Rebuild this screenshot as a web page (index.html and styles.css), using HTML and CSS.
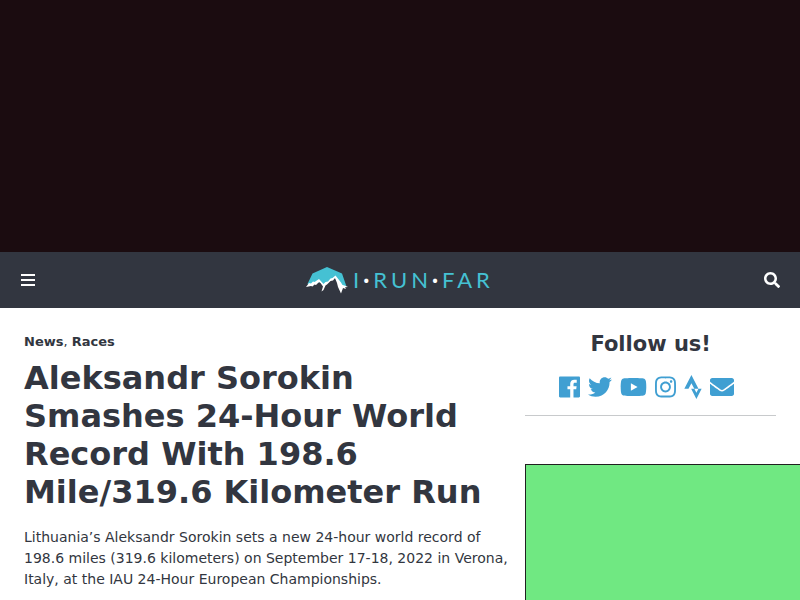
FILE: index.html
```
<!DOCTYPE html>
<html lang="en">
<head>
<meta charset="utf-8">
<meta name="viewport" content="width=device-width, initial-scale=1">
<title>Aleksandr Sorokin Smashes 24-Hour World Record</title>
<link rel="stylesheet" href="styles.css">
</head>
<body>
<div class="banner"></div>
<header class="navbar">
  <button class="nav-button" type="button" aria-label="Menu">
    <svg class="icon-menu" viewBox="0 0 14 12" shape-rendering="crispEdges"><path d="M0 0h14v2H0zM0 5h14v2H0zM0 10h14v2H0z"/></svg>
  </button>
  <a class="logo" href="#">
    <svg class="logo-mark" viewBox="0 0 42 28">
      <path fill="#45c1d3" d="M1.500 18L6.500 7.500 21 1l15 6.500 4.500 13-4 .5-7.500-9-5 2-6 6-4-4-8 3z"/>
      <path fill="#fff" d="M0 21l3-4 2 .5 2-2 1.500.5L13 13l4.500 5 2-2 2.500-.5 2.500-3 2-.5L29.500 9.500l5.500 7 1.500 2.500 2 .5 3.500 1.500-3 .3 1 1.700-3-1-2 5.500L32 21l-1-4-2-5-2 2.500-2.500.5-3.500 3.500-1.500 1-2 4.500-2 1.500 1.500-5-2.500-3.500-1.500-1-3 3-1.500-.5-2 2-1.500-.5z"/>
    </svg>
    <span class="wordmark">I<b>·</b>RUN<b>·</b>FAR</span>
  </a>
  <button class="nav-button" type="button" aria-label="Search">
    <svg class="icon-search" viewBox="0 0 512 512"><path d="M505 442.700L405.300 343c-4.500-4.500-10.600-7-17-7H372c27.600-35.300 44-79.700 44-128C416 93.100 322.900 0 208 0S0 93.100 0 208s93.100 208 208 208c48.300 0 92.700-16.400 128-44v16.300c0 6.400 2.500 12.500 7 17l99.700 99.700c9.400 9.400 24.600 9.400 33.900 0l28.300-28.300c9.400-9.400 9.400-24.600.1-34zM208 336c-70.700 0-128-57.200-128-128 0-70.700 57.200-128 128-128 70.700 0 128 57.200 128 128 0 70.700-57.200 128-128 128z"/></svg>
  </button>
</header>
<div class="content">
  <main class="article">
    <p class="categories"><a href="#">News</a>, <a href="#">Races</a></p>
    <h1>Aleksandr Sorokin Smashes 24-Hour World Record With 198.6 Mile/319.6 Kilometer Run</h1>
    <p class="summary">Lithuania’s Aleksandr Sorokin sets a new 24-hour world record of 198.6 miles (319.6 kilometers) on September 17-18, 2022 in Verona, Italy, at the IAU 24-Hour European Championships.</p>
  </main>
  <aside class="sidebar">
    <section class="follow">
      <h2>Follow us!</h2>
      <nav class="social" aria-label="Social media">
        <a href="#" aria-label="Facebook"><svg viewBox="0 0 448 512"><path d="M448 56.700v398.500c0 13.700-11.100 24.700-24.700 24.700H309.100V306.500h58.200l8.700-67.600h-67v-43.200c0-19.600 5.400-32.900 33.500-32.900h35.800v-60.500c-6.200-.8-27.400-2.700-52.200-2.700-51.600 0-87 31.500-87 89.400v49.900h-58.400v67.600h58.400V480H24.700C11.100 480 0 468.900 0 455.300V56.700C0 43.100 11.100 32 24.700 32h398.500c13.700 0 24.800 11.100 24.800 24.700z"/></svg></a>
        <a href="#" aria-label="Twitter"><svg viewBox="0 0 512 512"><path d="M459.370 151.716c.325 4.548.325 9.097.325 13.645 0 138.720-105.583 298.558-298.558 298.558-59.452 0-114.680-17.219-161.137-47.106 8.447.974 16.568 1.299 25.340 1.299 49.055 0 94.213-16.568 130.274-44.832-46.132-.975-84.792-31.188-98.112-72.772 6.498.974 12.995 1.624 19.818 1.624 9.421 0 18.843-1.300 27.614-3.573-48.081-9.747-84.143-51.980-84.143-102.985v-1.299c13.969 7.797 30.214 12.670 47.431 13.319-28.264-18.843-46.781-51.005-46.781-87.391 0-19.492 5.197-37.360 14.294-52.954 51.655 63.675 129.300 105.258 216.365 109.807-1.624-7.797-2.599-15.918-2.599-24.040 0-57.828 46.782-104.934 104.934-104.934 30.213 0 57.502 12.670 76.670 33.137 23.715-4.548 46.456-13.320 66.599-25.340-7.798 24.366-24.366 44.833-46.132 57.827 21.117-2.273 41.584-8.122 60.426-16.243-14.292 20.791-32.161 39.308-52.628 54.253z"/></svg></a>
        <a href="#" aria-label="YouTube"><svg viewBox="0 0 576 512"><path d="M549.655 124.083c-6.281-23.650-24.787-42.276-48.284-48.597C458.781 64 288 64 288 64S117.220 64 74.629 75.486c-23.497 6.322-42.003 24.947-48.284 48.597-11.412 42.867-11.412 132.305-11.412 132.305s0 89.438 11.412 132.305c6.281 23.650 24.787 41.500 48.284 47.821C117.220 448 288 448 288 448s170.780 0 213.371-11.486c23.497-6.321 42.003-24.171 48.284-47.821 11.412-42.867 11.412-132.305 11.412-132.305s0-89.438-11.412-132.305zM232.145 337.591V175.185l142.739 81.205z"/></svg></a>
        <a href="#" aria-label="Instagram"><svg viewBox="0 0 448 512"><path d="M224.100 141c-63.600 0-114.900 51.300-114.900 114.900s51.300 114.900 114.900 114.900S339 319.500 339 255.900 287.700 141 224.100 141zm0 189.600c-41.100 0-74.700-33.500-74.700-74.700s33.500-74.700 74.700-74.700 74.700 33.500 74.700 74.700-33.600 74.700-74.700 74.700zm146.400-194.300c0 14.900-12 26.800-26.800 26.800-14.900 0-26.800-12-26.800-26.800s12-26.800 26.800-26.800 26.800 12 26.800 26.800zm76.100 27.200c-1.700-35.900-9.900-67.700-36.200-93.900-26.200-26.200-58-34.400-93.900-36.200-37-2.100-147.900-2.100-184.900 0-35.800 1.700-67.600 9.900-93.900 36.100s-34.400 58-36.200 93.900c-2.100 37-2.100 147.900 0 184.900 1.700 35.900 9.900 67.700 36.200 93.900s58 34.400 93.900 36.200c37 2.100 147.900 2.100 184.900 0 35.900-1.700 67.700-9.900 93.900-36.200 26.200-26.200 34.400-58 36.200-93.900 2.100-37 2.100-147.800 0-184.800zM398.800 388c-7.800 19.600-22.900 34.700-42.600 42.600-29.500 11.700-99.500 9-132.100 9s-102.700 2.600-132.100-9c-19.600-7.800-34.700-22.900-42.600-42.600-11.700-29.500-9-99.500-9-132.100s-2.600-102.700 9-132.100c7.800-19.600 22.900-34.700 42.600-42.600 29.500-11.700 99.500-9 132.100-9s102.700-2.600 132.100 9c19.600 7.800 34.700 22.900 42.600 42.600 11.700 29.500 9 99.500 9 132.100s2.700 102.700-9 132.100z"/></svg></a>
        <a href="#" aria-label="Strava"><svg viewBox="0 0 384 512"><path d="M158.400 0L7 292h89.200l62.200-116.100L220.100 292h88.500zm150.200 292l-43.900 88.200-44.600-88.200h-67.600l112.200 220 111.500-220z"/></svg></a>
        <a href="#" aria-label="Email"><svg viewBox="0 0 512 512"><path d="M502.300 190.800c3.900-3.100 9.700-.2 9.700 4.700V400c0 26.500-21.500 48-48 48H48c-26.500 0-48-21.500-48-48V195.600c0-5 5.700-7.800 9.700-4.700 22.400 17.400 52.100 39.500 154.100 113.600 21.100 15.400 56.700 47.800 92.200 47.600 35.700.3 72-32.800 92.300-47.600 102-74.100 131.600-96.300 154-113.700zM256 320c23.200.4 56.600-29.200 73.400-41.400 132.700-96.300 142.800-104.700 173.400-128.700 5.800-4.500 9.200-11.500 9.200-18.900v-19c0-26.500-21.500-48-48-48H48c-26.500 0-48 21.500-48 48v19c0 7.400 3.400 14.300 9.200 18.900 30.600 23.900 40.700 32.400 173.400 128.700 16.800 12.200 50.200 41.800 73.400 41.400z"/></svg></a>
      </nav>
    </section>
    <div class="ad"></div>
  </aside>
</div>
</body>
</html>
```
FILE: styles.css
```
* {
  box-sizing: border-box;
}

body {
  margin: 0;
  overflow-x: hidden;
  background: #fff;
  color: #323640;
  font-family: "DejaVu Sans", sans-serif;
  font-size: 14px;
  line-height: 21px;
}

h1,
h2,
p {
  margin: 0;
}

a {
  color: inherit;
  text-decoration: none;
}

svg {
  display: block;
  fill: currentColor;
}

.banner {
  height: 252px;
  background: #1b0c10;
}

.navbar {
  display: flex;
  align-items: center;
  justify-content: space-between;
  height: 56px;
  background: #323640;
  color: #fff;
}

.nav-button {
  display: grid;
  place-items: center;
  width: 56px;
  height: 56px;
  padding: 0;
  border: 0;
  background: none;
  color: inherit;
}

.icon-menu {
  width: 14px;
  height: 12px;
}

.icon-search {
  width: 16px;
  height: 16px;
}

.logo {
  display: flex;
  align-items: center;
  gap: 5px;
  color: #45c1d3;
}

.logo-mark {
  width: 42px;
  height: 28px;
}

.wordmark {
  font-family: Lato, sans-serif;
  font-size: 22px;
  line-height: 28px;
  letter-spacing: 4px;
}

.wordmark b {
  color: #fff;
}

.content {
  display: grid;
  grid-template-columns: 2fr 1fr;
  padding: 0 24px;
}

.article,
.sidebar {
  min-width: 0;
}

.article {
  padding-top: 24px;
}

.categories {
  font-size: 13px;
  line-height: 20px;
}

.categories a {
  font-weight: bold;
}

h1 {
  margin: 7px 0 16px;
  font-size: 32px;
  line-height: 38px;
}

.summary {
  padding-right: 8px;
}

.follow {
  padding: 24px 0 16px;
  border-bottom: 1px solid #c8cacc;
  text-align: center;
}

h2 {
  font-size: 21px;
  line-height: 25px;
}

.social {
  display: flex;
  justify-content: center;
  gap: 8px;
  margin-top: 18px;
  padding-right: 8px;
  color: #409fd2;
}

.social svg {
  height: 24px;
}

.ad {
  width: 300px;
  height: 250px;
  margin-top: 48px;
  border: 1px solid #202020;
  background: #70e882;
}
```
